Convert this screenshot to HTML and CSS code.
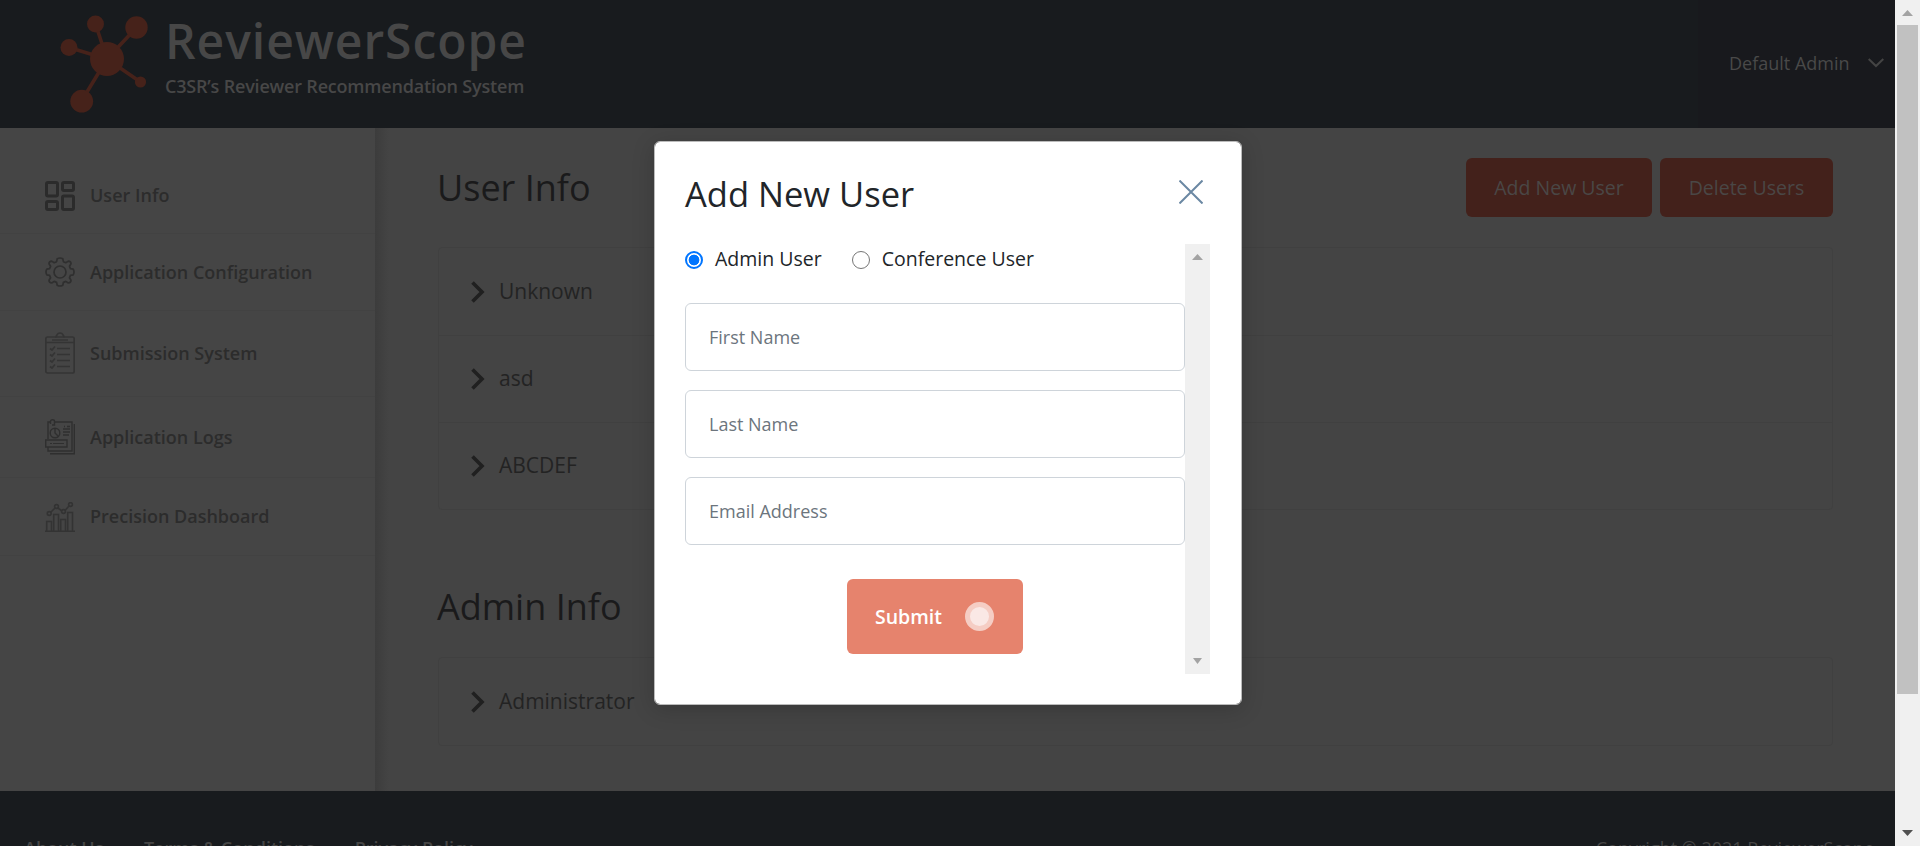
FILE: index.html
```html
<!DOCTYPE html>
<html lang="en">
<head>
<meta charset="utf-8">
<title>ReviewerScope</title>
<link rel="stylesheet" href="styles.css">
</head>
<body>
<div class="window">
  <div class="page">
    <header class="header">
      <div class="brand">
        <svg class="brand-mark" width="90" height="104" viewBox="60 12 90 104" fill="#46221a" stroke="#46221a" stroke-width="3.6">
          <path d="M107 59 95.5 24M107 59 136.500 27.500M107 59 69 47.500M107 59 140.500 82M107 59 81.500 101"/>
          <g stroke="none"><circle cx="107" cy="59" r="17"/><circle cx="95.500" cy="24" r="8.500"/><circle cx="136.500" cy="27.500" r="11.200"/><circle cx="69" cy="47.500" r="8.500"/><circle cx="140.500" cy="82" r="5.600"/><circle cx="81.700" cy="101.200" r="11.400"/></g>
        </svg>
        <div class="brand-text">
          <div class="brand-name">ReviewerScope</div>
          <div class="brand-tag">C3SR’s Reviewer Recommendation System</div>
        </div>
      </div>
      <div class="account">
        <span>Default Admin</span>
        <svg width="16" height="10" viewBox="0 0 16 10" fill="none" stroke="#444" stroke-width="2"><path d="M.7 1 8 8 15.300 1"/></svg>
      </div>
    </header>

    <div class="body">
      <nav class="sidebar">
        <a class="nav nav-info">
          <svg width="30" height="30" viewBox="0 0 30 30" fill="none" stroke="#2b2b2b" stroke-width="3"><rect x="1.500" y="1.500" width="11" height="13.500" rx="1.500"/><rect x="17.500" y="1.500" width="11" height="8" rx="1.500"/><rect x="1.500" y="20.500" width="11" height="8" rx="1.500"/><rect x="17.500" y="15" width="11" height="13.500" rx="1.500"/></svg>
          <span>User Info</span>
        </a>
        <a class="nav nav-config">
          <svg width="30" height="30" viewBox="0 0 30 30" fill="none" stroke="#2f2f2f" stroke-width="1.700" stroke-linejoin="round"><path d="M12.200 1.800Q15 .2 17.800 1.800L18.400 4.700 20.800 5.700 23.300 4.100Q26.200 4.400 26 6.800L24.500 9.200 25.400 11.600 28.200 12.200Q29.800 15 28.200 17.800L25.400 18.400 24.500 20.800 26 23.300Q26 25.800 23.300 26L20.800 24.400 18.400 25.400 17.800 28.200Q15 29.800 12.200 28.200L11.600 25.400 9.200 24.400 6.700 26Q4 25.800 4 23.300L5.600 20.800 4.600 18.400 1.800 17.800Q.2 15 1.800 12.200L4.600 11.600 5.600 9.200 4 6.800Q4 4.300 6.700 4.100L9.200 5.700 11.600 4.700Z"/><circle cx="15" cy="15" r="6"/></svg>
          <span>Application Configuration</span>
        </a>
        <a class="nav nav-submission">
          <svg width="30" height="42" viewBox="0 0 30 42" fill="none" stroke="#343434" stroke-width="1.700"><rect x=".8" y="5" width="28.400" height="36" rx="1.800"/><path d="M10.500 5C11.500 5 11.500 1 15 1S18.500 5 19.500 5M1 10.500H29M7 8H23M12 16.500H25M12 22.500H25M12 28.500H25M12 34.500H25M5 16.500 7 18 10 14.500M5 22.500 7 24 10 20.500M5 28.500 7 30 10 26.500M5 34.500 7 36 10 32.500"/></svg>
          <span>Submission System</span>
        </a>
        <a class="nav nav-logs">
          <svg width="30" height="36" viewBox="0 0 30 36" fill="none" stroke="#2f2f2f" stroke-width="1.400"><path d="M10 3H27V32H3V28M3 20V3H5M29.300 5V34.800H5"/><path d="M5.500 5V2.500Q5.500.8 7.500.8T9.500 2.500V6H7"/><circle cx="10" cy="14" r="4.800"/><path d="M10 9.200V14L13.500 17.500M19 7.500H20M22 7.500H25M18 10H25M18 13H25M18 16H24M.7 21H22V28H.7Z" /><path d="M5 24.500H7M8 24.500H19" stroke-width="1"/></svg>
          <span>Application Logs</span>
        </a>
        <a class="nav nav-precision">
          <svg width="30" height="30" viewBox="0 0 30 30" fill="none" stroke="#333" stroke-width="1.600"><path d="M0 29.200H30M1.700 29V19.500H6.500V29M8.700 29V12.500H13.500V29M15.700 29V17.500H20.500V29M22.700 29V10.500H27.500V29M5.500 10.500 10 6M13 6 17 9M20 8.500 24.200 3.800"/><circle cx="4.200" cy="11.500" r="1.900"/><circle cx="11.500" cy="4.500" r="1.900"/><circle cx="18.500" cy="9.500" r="1.900"/><circle cx="25.500" cy="2.500" r="1.900"/></svg>
          <span>Precision Dashboard</span>
        </a>
      </nav>

      <main class="main">
        <div class="section-head">
          <h1>User Info</h1>
          <div class="actions"><button class="btn btn-add">Add New User</button><button class="btn btn-delete">Delete Users</button></div>
        </div>
        <div class="accordion">
          <div class="row"><svg width="14" height="22" viewBox="0 0 14 22"><path d="M1.500 1.500 11 11 1.500 20.500"/></svg><span>Unknown</span></div>
          <div class="row"><svg width="14" height="22" viewBox="0 0 14 22"><path d="M1.500 1.500 11 11 1.500 20.500"/></svg><span>asd</span></div>
          <div class="row"><svg width="14" height="22" viewBox="0 0 14 22"><path d="M1.500 1.500 11 11 1.500 20.500"/></svg><span>ABCDEF</span></div>
        </div>
        <div class="section-head section-admin"><h1>Admin Info</h1></div>
        <div class="accordion accordion-admin">
          <div class="row"><svg width="14" height="22" viewBox="0 0 14 22"><path d="M1.500 1.500 11 11 1.500 20.500"/></svg><span>Administrator</span></div>
        </div>
      </main>
    </div>

    <footer class="footer">
      <div class="links"><a>About Us</a><a>Terms &amp; Conditions</a><a>Privacy Policy</a></div>
      <div class="copy">Copyright © 2021 ReviewerScope</div>
    </footer>
  </div>

  <div class="scrollbar">
    <svg width="25" height="25" viewBox="0 0 25 25"><path d="M7 16H18L12.500 10Z" fill="#a3a3a3"/></svg>
    <div class="thumb"></div>
    <svg class="down" width="25" height="25" viewBox="0 0 25 25"><path d="M7 9H18L12.500 15Z" fill="#505050"/></svg>
  </div>
</div>

<div class="modal">
  <div class="modal-head">
    <h2>Add New User</h2>
    <svg width="24" height="24" viewBox="0 0 24 24" stroke="#6b88a3" stroke-width="2"><path d="M.5.5 23.500 23.500M23.500.5.5 23.500"/></svg>
  </div>
  <div class="modal-body">
    <form class="form">
      <div class="radios">
        <label class="radio"><span class="dot on"></span><span>Admin User</span></label>
        <label class="radio"><span class="dot"></span><span>Conference User</span></label>
      </div>
      <input class="field" placeholder="First Name">
      <input class="field" placeholder="Last Name">
      <input class="field" placeholder="Email Address">
      <button type="button" class="submit"><span>Submit</span><i class="spinner"></i></button>
    </form>
    <div class="scrollbar">
      <svg width="25" height="25" viewBox="0 0 25 25"><path d="M7 16H18L12.500 10Z" fill="#a3a3a3"/></svg>
      <svg class="down" width="25" height="25" viewBox="0 0 25 25"><path d="M8 9H17L12.500 15Z" fill="#a3a3a3"/></svg>
    </div>
  </div>
</div>
</body>
</html>
```

FILE: styles.css
```css
* { box-sizing: border-box; }
html, body { margin: 0; height: 100%; overflow: hidden; }
body { font-family: "Open Sans", "Noto Sans", sans-serif; font-size: 18px; background: #444; }
h1, h2 { margin: 0; font-weight: 400; font-size: 36px; line-height: 48px; }
h2 { font-size: 34.5px; line-height: 46px; }
button { border: 0; font-family: inherit; }
svg { display: block; flex: none; }

.window { display: flex; height: 846px; }
.page { width: 1895px; height: 846px; overflow: hidden; display: flex; flex-direction: column; }

.header { height: 128px; flex: none; display: flex; justify-content: space-between; background: #181b1e; }
.brand { display: flex; padding: 12px 0 0 60px; color: #474747; }
.brand-text { padding-left: 15px; }
.brand-name { font-size: 48px; line-height: 60px; font-weight: 600; margin-top: -1px; letter-spacing: .95px; white-space: nowrap; }
.brand-tag { font-size: 18px; line-height: 26px; font-weight: 600; margin-top: 2px; letter-spacing: -.19px; white-space: nowrap; }
.account { width: 197px; background: #18191d; display: flex; align-items: center; padding: 0 0 2px 31px; color: #494949; font-size: 18px; gap: 18px; white-space: nowrap; }

.body { height: 663px; flex: none; display: flex; }
.sidebar { width: 375px; padding-top: 27px; background: #454545; }
.nav { display: flex; align-items: center; gap: 15px; padding-left: 45px; color: #2c2c2c; font-weight: 600; border-bottom: 1px solid #424242; }
.nav span { margin-top: -1px; }
.nav-info { height: 79px; padding-top: 3px; }
.nav-config { height: 77px; }
.nav-submission { height: 86px; padding-bottom: 1px; }
.nav-logs { height: 81px; }
.nav-precision { height: 78px; }

.main { flex: 1; padding: 30px 62px 0 63px; background: linear-gradient(90deg, #3c3c3c, #3f3f3f 5px, #444 14px); }
.section-head { height: 60px; display: flex; justify-content: space-between; align-items: flex-start; color: #1a1a1b; }
.section-head h1 { margin: 6px 0 0 -1px; }
.actions { display: flex; gap: 8px; }
.btn { height: 59px; border-radius: 6px; background: #43211b; color: #4a4746; font-size: 19.5px; padding: 0 0 1px; }
.btn-add { width: 186px; }
.btn-delete { width: 173px; }
.accordion { margin-top: 29px; border: 1px solid #404040; border-radius: 4px; }
.row { height: 87px; display: flex; align-items: center; gap: 14px; padding-left: 32px; font-size: 21px; color: #232323; }
.row span { margin-top: -2px; }
.row + .row { border-top: 1px solid #404040; }
.row path { fill: none; stroke: #202020; stroke-width: 3.6; }
.section-admin { margin-top: 67px; height: 56px; }
.accordion-admin { margin-top: 24px; }

.footer { flex: 1; background: #181b1e; display: flex; justify-content: space-between; padding: 44px 21px 0 24px; color: #454545; font-weight: 600; line-height: 26px; }
.links { display: flex; gap: 40.5px; }
.copy { font-weight: 400; }

.scrollbar { width: 25px; flex: none; display: flex; flex-direction: column; background: #f0f0f0; }
.thumb { height: 669px; margin: 0 2px; background: #c1c1c1; }
.down { margin-top: auto; }

.modal { position: absolute; left: 654px; top: 141px; width: 588px; height: 564px; padding: 29px 31px 30px 30px; background: #fff; border: 1px solid #bbb; border-radius: 6px; background-clip: padding-box; box-shadow: 0 4px 22px rgba(0, 0, 0, .18); color: #212529; }
.modal-head { display: flex; justify-content: space-between; padding-right: 7px; height: 73px; }
.modal-head svg { margin-top: 9px; }
.modal-body { display: flex; height: 430px; }
.form { width: 500px; display: flex; flex-direction: column; }
.radios { height: 59px; display: flex; font-size: 19.5px; line-height: 29px; gap: 30px; }
.radio { display: flex; gap: 12px; }
.dot { width: 18px; height: 18px; margin-top: 7px; border: 1.5px solid #767676; border-radius: 50%; }
.dot.on { border: 2px solid #0075ff; background: radial-gradient(circle, #0075ff 5px, #fff 5.7px); }
.field { height: 68px; flex: none; margin: 0 0 19px; padding: 0 23px; border: 1px solid #ced4da; border-radius: 6px; font: 18px "Open Sans", sans-serif; }
.field::placeholder { color: #6c757d; opacity: 1; }
.submit { width: 176px; height: 75px; margin: 15px 0 0 162px; display: flex; align-items: center; padding: 0 29px 0 28px; justify-content: space-between; border-radius: 6px; background: #e6836d; color: #fff; font-size: 19.5px; font-weight: 600; }
.spinner { width: 29px; height: 29px; border-radius: 50%; border: 5px solid #f5cdc4; background: #fae8e5; }
```
